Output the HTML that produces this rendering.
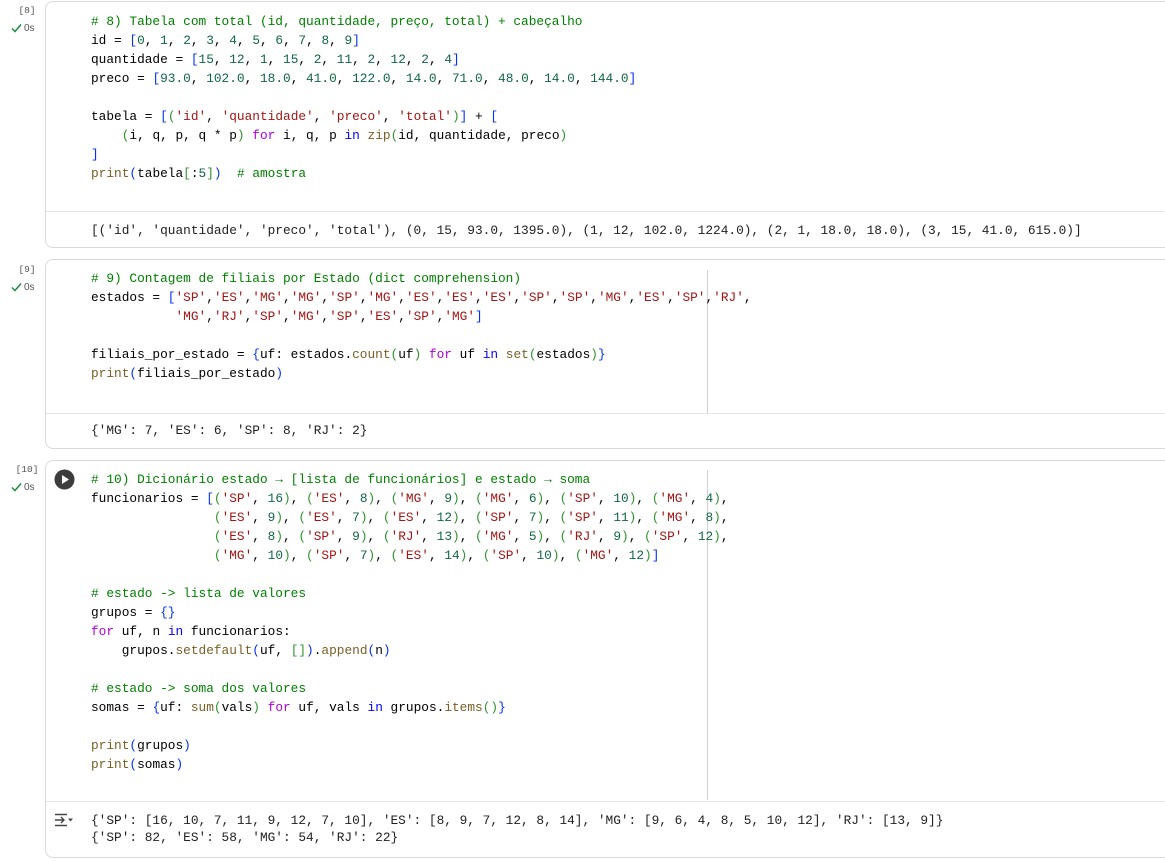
<!DOCTYPE html>
<html><head><meta charset="utf-8">
<style>
html,body{margin:0;padding:0;background:#fff;width:1165px;height:862px;overflow:hidden;position:relative;font-family:"Liberation Sans",sans-serif}
.cell{position:absolute;left:45px;width:1130px;border:1px solid #dadada;border-radius:8px;box-sizing:border-box;background:#fff}
.sep{position:absolute;left:46px;width:1130px;height:1px;background:#e6e6e6}
.ruler{position:absolute;left:707px;width:1px;background:#d0d0d0}
pre{position:absolute;left:91px;margin:0;font-family:"Liberation Mono",monospace;font-size:12.8px;line-height:19px;color:#000;white-space:pre}
pre.out{line-height:17px;color:#212121}
.c{color:#008000}.s{color:#a31515}.n{color:#116644}.b1{color:#0431fa}.b2{color:#319331}.b3{color:#7b3814}.k{color:#af00db}.kw{color:#0000ff}.f{color:#795e26}
.num{position:absolute;left:12px;width:30px;text-align:center;font-family:"Liberation Mono",monospace;font-size:9.5px;color:#555}
.ok{position:absolute;left:11px;font-size:10px;color:#555}
.ok svg{vertical-align:-2px;margin-right:2px}
</style></head><body>

<!-- cell 8 -->
<div class="cell" style="top:1px;height:247px"></div>
<div class="sep" style="top:211px"></div>
<div class="num" style="top:5px">[8]</div>
<div class="ok" style="top:23px"><svg width="11" height="10" viewBox="0 0 11 10"><path d="M1 5.5 L4 8.5 L10 1.5" stroke="#1e8e3e" stroke-width="1.5" fill="none"/></svg>0s</div>
<pre style="top:12px"><span class="c"># 8) Tabela com total (id, quantidade, preço, total) + cabeçalho</span>
id = <span class="b1">[</span><span class="n">0</span>, <span class="n">1</span>, <span class="n">2</span>, <span class="n">3</span>, <span class="n">4</span>, <span class="n">5</span>, <span class="n">6</span>, <span class="n">7</span>, <span class="n">8</span>, <span class="n">9</span><span class="b1">]</span>
quantidade = <span class="b1">[</span><span class="n">15</span>, <span class="n">12</span>, <span class="n">1</span>, <span class="n">15</span>, <span class="n">2</span>, <span class="n">11</span>, <span class="n">2</span>, <span class="n">12</span>, <span class="n">2</span>, <span class="n">4</span><span class="b1">]</span>
preco = <span class="b1">[</span><span class="n">93.0</span>, <span class="n">102.0</span>, <span class="n">18.0</span>, <span class="n">41.0</span>, <span class="n">122.0</span>, <span class="n">14.0</span>, <span class="n">71.0</span>, <span class="n">48.0</span>, <span class="n">14.0</span>, <span class="n">144.0</span><span class="b1">]</span>

tabela = <span class="b1">[</span><span class="b2">(</span><span class="s">'id'</span>, <span class="s">'quantidade'</span>, <span class="s">'preco'</span>, <span class="s">'total'</span><span class="b2">)</span><span class="b1">]</span> + <span class="b1">[</span>
    <span class="b2">(</span>i, q, p, q * p<span class="b2">)</span> <span class="k">for</span> i, q, p <span class="kw">in</span> <span class="f">zip</span><span class="b2">(</span>id, quantidade, preco<span class="b2">)</span>
<span class="b1">]</span>
<span class="f">print</span><span class="b1">(</span>tabela<span class="b2">[</span>:<span class="n">5</span><span class="b2">]</span><span class="b1">)</span>  <span class="c"># amostra</span></pre>
<pre class="out" style="top:222px">[('id', 'quantidade', 'preco', 'total'), (0, 15, 93.0, 1395.0), (1, 12, 102.0, 1224.0), (2, 1, 18.0, 18.0), (3, 15, 41.0, 615.0)]</pre>

<!-- cell 9 -->
<div class="cell" style="top:259px;height:190px"></div>
<div class="ruler" style="top:270px;height:143px"></div>
<div class="sep" style="top:413px"></div>
<div class="num" style="top:264px">[9]</div>
<div class="ok" style="top:282px"><svg width="11" height="10" viewBox="0 0 11 10"><path d="M1 5.5 L4 8.5 L10 1.5" stroke="#1e8e3e" stroke-width="1.5" fill="none"/></svg>0s</div>
<pre style="top:269px"><span class="c"># 9) Contagem de filiais por Estado (dict comprehension)</span>
estados = <span class="b1">[</span><span class="s">'SP'</span>,<span class="s">'ES'</span>,<span class="s">'MG'</span>,<span class="s">'MG'</span>,<span class="s">'SP'</span>,<span class="s">'MG'</span>,<span class="s">'ES'</span>,<span class="s">'ES'</span>,<span class="s">'ES'</span>,<span class="s">'SP'</span>,<span class="s">'SP'</span>,<span class="s">'MG'</span>,<span class="s">'ES'</span>,<span class="s">'SP'</span>,<span class="s">'RJ'</span>,
           <span class="s">'MG'</span>,<span class="s">'RJ'</span>,<span class="s">'SP'</span>,<span class="s">'MG'</span>,<span class="s">'SP'</span>,<span class="s">'ES'</span>,<span class="s">'SP'</span>,<span class="s">'MG'</span><span class="b1">]</span>

filiais_por_estado = <span class="b1">{</span>uf: estados.<span class="f">count</span><span class="b2">(</span>uf<span class="b2">)</span> <span class="k">for</span> uf <span class="kw">in</span> <span class="f">set</span><span class="b2">(</span>estados<span class="b2">)</span><span class="b1">}</span>
<span class="f">print</span><span class="b1">(</span>filiais_por_estado<span class="b1">)</span></pre>
<pre class="out" style="top:422px">{'MG': 7, 'ES': 6, 'SP': 8, 'RJ': 2}</pre>

<!-- cell 10 -->
<div class="cell" style="top:460px;height:398px"></div>
<div class="ruler" style="top:470px;height:330px"></div>
<div class="sep" style="top:801px"></div>
<div class="num" style="top:464px">[10]</div>
<div class="ok" style="top:482px"><svg width="11" height="10" viewBox="0 0 11 10"><path d="M1 5.5 L4 8.5 L10 1.5" stroke="#1e8e3e" stroke-width="1.5" fill="none"/></svg>0s</div>
<svg style="position:absolute;left:54px;top:469px" width="21" height="21" viewBox="0 0 21 21"><circle cx="10.5" cy="10.5" r="10" fill="#3c3c3c"/><path d="M8 6 L15 10.5 L8 15 Z" fill="#fff"/></svg>
<pre style="top:470px"><span class="c"># 10) Dicionário estado → [lista de funcionários] e estado → soma</span>
funcionarios = <span class="b1">[</span><span class="b2">(</span><span class="s">'SP'</span>, <span class="n">16</span><span class="b2">)</span>, <span class="b2">(</span><span class="s">'ES'</span>, <span class="n">8</span><span class="b2">)</span>, <span class="b2">(</span><span class="s">'MG'</span>, <span class="n">9</span><span class="b2">)</span>, <span class="b2">(</span><span class="s">'MG'</span>, <span class="n">6</span><span class="b2">)</span>, <span class="b2">(</span><span class="s">'SP'</span>, <span class="n">10</span><span class="b2">)</span>, <span class="b2">(</span><span class="s">'MG'</span>, <span class="n">4</span><span class="b2">)</span>,
                <span class="b2">(</span><span class="s">'ES'</span>, <span class="n">9</span><span class="b2">)</span>, <span class="b2">(</span><span class="s">'ES'</span>, <span class="n">7</span><span class="b2">)</span>, <span class="b2">(</span><span class="s">'ES'</span>, <span class="n">12</span><span class="b2">)</span>, <span class="b2">(</span><span class="s">'SP'</span>, <span class="n">7</span><span class="b2">)</span>, <span class="b2">(</span><span class="s">'SP'</span>, <span class="n">11</span><span class="b2">)</span>, <span class="b2">(</span><span class="s">'MG'</span>, <span class="n">8</span><span class="b2">)</span>,
                <span class="b2">(</span><span class="s">'ES'</span>, <span class="n">8</span><span class="b2">)</span>, <span class="b2">(</span><span class="s">'SP'</span>, <span class="n">9</span><span class="b2">)</span>, <span class="b2">(</span><span class="s">'RJ'</span>, <span class="n">13</span><span class="b2">)</span>, <span class="b2">(</span><span class="s">'MG'</span>, <span class="n">5</span><span class="b2">)</span>, <span class="b2">(</span><span class="s">'RJ'</span>, <span class="n">9</span><span class="b2">)</span>, <span class="b2">(</span><span class="s">'SP'</span>, <span class="n">12</span><span class="b2">)</span>,
                <span class="b2">(</span><span class="s">'MG'</span>, <span class="n">10</span><span class="b2">)</span>, <span class="b2">(</span><span class="s">'SP'</span>, <span class="n">7</span><span class="b2">)</span>, <span class="b2">(</span><span class="s">'ES'</span>, <span class="n">14</span><span class="b2">)</span>, <span class="b2">(</span><span class="s">'SP'</span>, <span class="n">10</span><span class="b2">)</span>, <span class="b2">(</span><span class="s">'MG'</span>, <span class="n">12</span><span class="b2">)</span><span class="b1">]</span>

<span class="c"># estado -&gt; lista de valores</span>
grupos = <span class="b1">{}</span>
<span class="k">for</span> uf, n <span class="kw">in</span> funcionarios:
    grupos.<span class="f">setdefault</span><span class="b1">(</span>uf, <span class="b2">[]</span><span class="b1">)</span>.<span class="f">append</span><span class="b1">(</span>n<span class="b1">)</span>

<span class="c"># estado -&gt; soma dos valores</span>
somas = <span class="b1">{</span>uf: <span class="f">sum</span><span class="b2">(</span>vals<span class="b2">)</span> <span class="k">for</span> uf, vals <span class="kw">in</span> grupos.<span class="f">items</span><span class="b2">()</span><span class="b1">}</span>

<span class="f">print</span><span class="b1">(</span>grupos<span class="b1">)</span>
<span class="f">print</span><span class="b1">(</span>somas<span class="b1">)</span></pre>
<svg style="position:absolute;left:54px;top:813px" width="20" height="14" viewBox="0 0 20 14"><path d="M1 1.5 H13 M1 12.5 H13 M1 7 H10 M7 4 L10 7 L7 10" stroke="#444" stroke-width="1.4" fill="none"/><path d="M14 5.5 H19 L16.5 8.5 Z" fill="#444"/></svg>
<pre class="out" style="top:812px">{'SP': [16, 10, 7, 11, 9, 12, 7, 10], 'ES': [8, 9, 7, 12, 8, 14], 'MG': [9, 6, 4, 8, 5, 10, 12], 'RJ': [13, 9]}
{'SP': 82, 'ES': 58, 'MG': 54, 'RJ': 22}</pre>

</body></html>
